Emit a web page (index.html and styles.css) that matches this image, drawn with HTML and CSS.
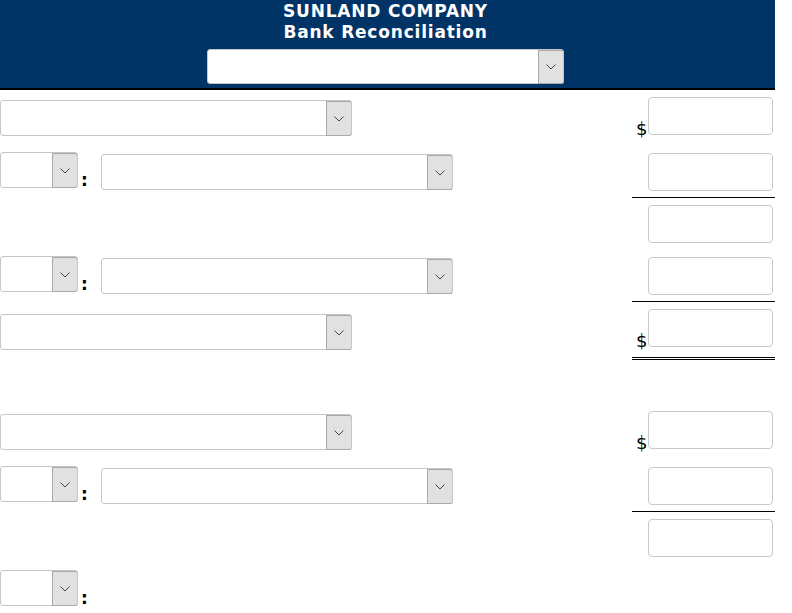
FILE: index.html
```html
<!DOCTYPE html>
<html>
<head>
    <title>Sunland Company - Bank Reconciliation</title>
    <link rel="stylesheet" href="styles.css">
</head>
<body>
    <div class="sheet">
        <div class="head">
            <div class="title">SUNLAND COMPANY</div>
            <div class="title">Bank Reconciliation</div>
            <div class="pick pick-head"><span class="arrow"><svg width="10" height="6" viewBox="0 0 10 6"><path d="M0.5 0.5 L5 5 L9.5 0.5" fill="none" stroke="#444" stroke-width="1"/></svg></span></div>
        </div>

        <!-- section 1 -->
        <div class="row row-lead">
            <div class="left"><div class="pick pick-wide"><span class="arrow"><svg width="10" height="6" viewBox="0 0 10 6"><path d="M0.5 0.5 L5 5 L9.5 0.5" fill="none" stroke="#444" stroke-width="1"/></svg></span></div></div>
            <div class="amt"><span class="cur">$</span><span class="box"></span></div>
        </div>
        <div class="row row-sub">
            <div class="left">
                <div class="pick pick-small"><span class="arrow"><svg width="10" height="6" viewBox="0 0 10 6"><path d="M0.5 0.5 L5 5 L9.5 0.5" fill="none" stroke="#444" stroke-width="1"/></svg></span></div>
                <span class="colon">:</span>
                <div class="pick pick-wide pick-low"><span class="arrow"><svg width="10" height="6" viewBox="0 0 10 6"><path d="M0.5 0.5 L5 5 L9.5 0.5" fill="none" stroke="#444" stroke-width="1"/></svg></span></div>
            </div>
            <div class="amt ruled"><span class="cur"></span><span class="box"></span></div>
        </div>
        <div class="row row-sub">
            <div class="left"></div>
            <div class="amt"><span class="cur"></span><span class="box"></span></div>
        </div>
        <div class="row row-sub">
            <div class="left">
                <div class="pick pick-small"><span class="arrow"><svg width="10" height="6" viewBox="0 0 10 6"><path d="M0.5 0.5 L5 5 L9.5 0.5" fill="none" stroke="#444" stroke-width="1"/></svg></span></div>
                <span class="colon">:</span>
                <div class="pick pick-wide pick-low"><span class="arrow"><svg width="10" height="6" viewBox="0 0 10 6"><path d="M0.5 0.5 L5 5 L9.5 0.5" fill="none" stroke="#444" stroke-width="1"/></svg></span></div>
            </div>
            <div class="amt ruled"><span class="cur"></span><span class="box"></span></div>
        </div>
        <div class="row row-total">
            <div class="left"><div class="pick pick-wide"><span class="arrow"><svg width="10" height="6" viewBox="0 0 10 6"><path d="M0.5 0.5 L5 5 L9.5 0.5" fill="none" stroke="#444" stroke-width="1"/></svg></span></div></div>
            <div class="amt double"><span class="cur">$</span><span class="box"></span></div>
        </div>

        <!-- section 2 -->
        <div class="row row-lead section">
            <div class="left"><div class="pick pick-wide"><span class="arrow"><svg width="10" height="6" viewBox="0 0 10 6"><path d="M0.5 0.5 L5 5 L9.5 0.5" fill="none" stroke="#444" stroke-width="1"/></svg></span></div></div>
            <div class="amt"><span class="cur">$</span><span class="box"></span></div>
        </div>
        <div class="row row-sub">
            <div class="left">
                <div class="pick pick-small"><span class="arrow"><svg width="10" height="6" viewBox="0 0 10 6"><path d="M0.5 0.5 L5 5 L9.5 0.5" fill="none" stroke="#444" stroke-width="1"/></svg></span></div>
                <span class="colon">:</span>
                <div class="pick pick-wide pick-low"><span class="arrow"><svg width="10" height="6" viewBox="0 0 10 6"><path d="M0.5 0.5 L5 5 L9.5 0.5" fill="none" stroke="#444" stroke-width="1"/></svg></span></div>
            </div>
            <div class="amt ruled"><span class="cur"></span><span class="box"></span></div>
        </div>
        <div class="row row-sub">
            <div class="left"></div>
            <div class="amt"><span class="cur"></span><span class="box"></span></div>
        </div>
        <div class="row row-sub">
            <div class="left">
                <div class="pick pick-small"><span class="arrow"><svg width="10" height="6" viewBox="0 0 10 6"><path d="M0.5 0.5 L5 5 L9.5 0.5" fill="none" stroke="#444" stroke-width="1"/></svg></span></div>
                <span class="colon">:</span>
            </div>
        </div>
    </div>
</body>
</html>
```

FILE: styles.css
```css
body {
    margin: 0;
    background: #fff;
    font-family: "DejaVu Sans", Verdana, sans-serif;
    font-size: 16px;
    color: #000;
}

.sheet {
    width: 775px;
}

.head {
    background: #003366;
    border-bottom: 2px solid #000;
    padding: 1px 4px 4px 0;
    display: flex;
    flex-direction: column;
    align-items: center;
}

.title {
    color: #fff;
    font-weight: bold;
    font-size: 17px;
    letter-spacing: 0.8px;
    line-height: 21px;
}

/* dropdowns */
.pick {
    display: flex;
    justify-content: flex-end;
    box-sizing: border-box;
    height: 36px;
    background: #fff;
    border: 1px solid #c6c6c6;
    border-radius: 3px;
}

.pick-head {
    width: 357px;
    height: 35px;
    margin-top: 6px;
}

.pick-wide {
    width: 352px;
}

.pick-small {
    width: 78px;
}

.pick-low {
    margin-top: 2px;
}

.arrow {
    display: flex;
    align-items: center;
    justify-content: center;
    box-sizing: border-box;
    width: 26px;
    margin: 0 -1px -1px 0;
    background: #e1e1e1;
    border: 1px solid #a9a9a9;
    border-right-color: #c6c6c6;
    border-radius: 0 3px 3px 0;
}

.arrow svg {
    display: block;
}

/* rows */
.row {
    display: flex;
    align-items: flex-start;
}

.row-lead {
    height: 56px;
}

.row-sub {
    height: 52px;
}

.row-total {
    height: 58px;
}

.section {
    margin-top: 44px;
}

.left {
    flex: 1;
    display: flex;
    align-items: flex-start;
}

.row-lead .left {
    padding-top: 10px;
}

.row-sub .left {
    padding-top: 6px;
}

.row-total .left {
    padding-top: 12px;
}

.colon {
    width: 23px;
    box-sizing: border-box;
    padding-left: 3px;
    margin-top: 20px;
    font-size: 17px;
    font-weight: bold;
    line-height: 16px;
}

/* amount column */
.amt {
    width: 143px;
    box-sizing: border-box;
    display: flex;
    align-items: flex-end;
    padding: 7px 2px 6px 4px;
}

.amt.ruled {
    border-bottom: 1px solid #000;
}

.amt.double {
    padding-bottom: 10px;
    border-bottom: 3px double #000;
}

.cur {
    width: 12px;
    font-size: 18px;
    line-height: 16px;
    margin-bottom: -2px;
}

.box {
    display: block;
    width: 125px;
    height: 38px;
    box-sizing: border-box;
    border: 1px solid #c8c8c8;
    border-radius: 4px;
    background: #fff;
}
```
